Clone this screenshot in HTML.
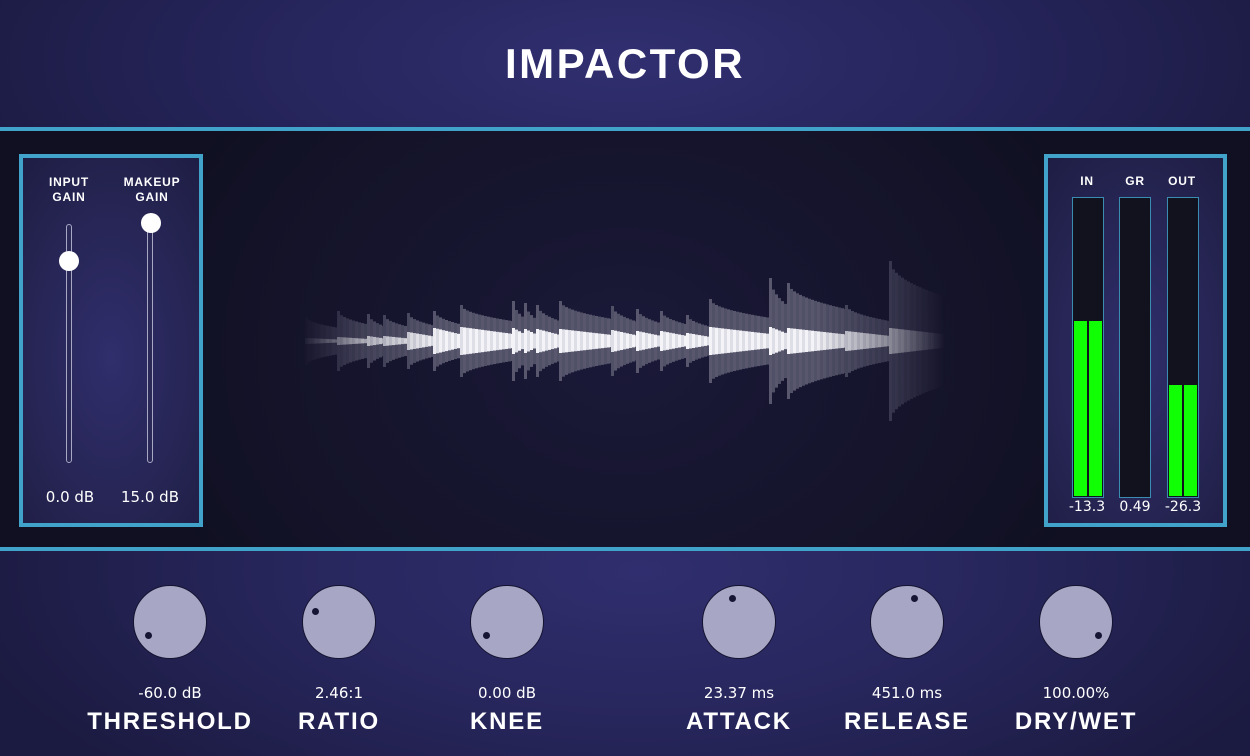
<!DOCTYPE html>
<html><head><meta charset="utf-8"><style>
*{margin:0;padding:0;box-sizing:border-box}
body{width:1250px;height:756px;overflow:hidden;background:#15152e;font-family:"Liberation Sans","DejaVu Sans",sans-serif;color:#fff;position:relative}
.hdr{position:absolute;left:0;top:0;width:1250px;height:127px;background:radial-gradient(ellipse 700px 260px at 625px 60px,#312f70 0%,#25245a 55%,#1c1b42 100%)}
.line{position:absolute;left:0;width:1250px;height:4px;background:#41a3c9}
.mid{position:absolute;left:0;top:131px;width:1250px;height:416px;background:radial-gradient(ellipse 500px 400px at 625px 220px,#1a1938 0%,#141329 70%,#101022 100%)}
.bot{position:absolute;left:0;top:551px;width:1250px;height:205px;background:radial-gradient(ellipse 700px 300px at 640px 20px,#302e6e 0%,#27265c 50%,#1b1a40 100%)}
h1{position:absolute;left:0;width:1250px;top:40px;text-align:center;font-size:42px;font-weight:bold;letter-spacing:2.5px;font-family:"Liberation Sans",sans-serif}
.panel{position:absolute;border:4px solid #41a3c9;background:radial-gradient(ellipse 140px 260px at 50% 55%,#302e6c 0%,#24234f 70%,#1e1d44 100%)}
.sl{position:absolute;font-size:12px;font-weight:bold;text-align:center;letter-spacing:0.8px;line-height:15px;font-family:"Liberation Sans",sans-serif}
.trk{position:absolute;width:6px;border:1.5px solid #a8a7c4;border-radius:3px;background:#2a2958}
.th{position:absolute;width:20px;height:20px;border-radius:50%;background:#fff}
.v{position:absolute;font-size:15px;text-align:center;font-family:"DejaVu Sans",sans-serif}
.meter{position:absolute;top:197px;width:32px;height:301px;border:1px solid #3a8db0;background:#12121f}
.g{position:absolute;bottom:1px;width:13px;background:#10ff04}
.knob{position:absolute;width:74px;height:74px;border-radius:50%;background:#a7a6c4;border:1.5px solid #141330}
.dot{position:absolute;width:7px;height:7px;border-radius:50%;background:#171534}
.kv{position:absolute;width:200px;text-align:center;font-size:15px;top:684px;font-family:"DejaVu Sans",sans-serif}
.kl{position:absolute;width:240px;text-align:center;font-size:24px;font-weight:bold;top:708px;letter-spacing:1.8px;font-family:"Liberation Sans",sans-serif}
</style></head><body>
<div class="hdr"></div>
<h1>IMPACTOR</h1>
<div class="line" style="top:127px"></div>
<div class="mid"></div>
<div class="line" style="top:547px"></div>
<div class="bot"></div>

<svg id="wv" style="position:absolute;left:0;top:0" width="1250" height="756">
<defs>
<linearGradient id="fade" x1="300" x2="945" y1="0" y2="0" gradientUnits="userSpaceOnUse">
<stop offset="0" stop-color="#fff" stop-opacity="0"/>
<stop offset="0.1" stop-color="#fff" stop-opacity="0.7"/>
<stop offset="0.22" stop-color="#fff" stop-opacity="1"/>
<stop offset="0.8" stop-color="#fff" stop-opacity="1"/>
<stop offset="0.92" stop-color="#fff" stop-opacity="0.5"/>
<stop offset="1" stop-color="#fff" stop-opacity="0"/>
</linearGradient>
<mask id="m"><rect x="0" y="0" width="1250" height="756" fill="url(#fade)"/></mask>
</defs>
<g id="wg" mask="url(#m)"></g>
</svg>

<div class="panel" style="left:19px;top:154px;width:184px;height:373px"></div>
<div class="sl" style="left:39px;top:175px;width:60px">INPUT<br>GAIN</div>
<div class="sl" style="left:113px;top:175px;width:78px">MAKEUP<br>GAIN</div>
<div class="trk" style="left:66px;top:224px;height:239px"></div>
<div class="trk" style="left:147px;top:224px;height:239px"></div>
<div class="th" style="left:59px;top:251px"></div>
<div class="th" style="left:141px;top:213px"></div>
<div class="v" style="left:30px;top:488px;width:80px">0.0 dB</div>
<div class="v" style="left:110px;top:488px;width:80px">15.0 dB</div>

<div class="panel" style="left:1044px;top:154px;width:183px;height:373px"></div>
<div class="sl" style="left:1067px;top:174px;width:40px">IN</div>
<div class="sl" style="left:1115px;top:174px;width:40px">GR</div>
<div class="sl" style="left:1162px;top:174px;width:40px">OUT</div>
<div class="meter" style="left:1072px"><div class="g" style="left:1px;height:175px"></div><div class="g" style="left:16px;height:175px"></div></div>
<div class="meter" style="left:1119px"></div>
<div class="meter" style="left:1167px"><div class="g" style="left:1px;height:111px"></div><div class="g" style="left:16px;height:111px"></div></div>
<div class="v" style="left:1057px;top:499px;width:60px;font-size:14px">-13.3</div>
<div class="v" style="left:1105px;top:499px;width:60px;font-size:14px">0.49</div>
<div class="v" style="left:1153px;top:499px;width:60px;font-size:14px">-26.3</div>

<div class="knob" style="left:133px;top:585px"><div class="dot" style="left:11px;top:46px"></div></div>
<div class="knob" style="left:302px;top:585px"><div class="dot" style="left:9px;top:22px"></div></div>
<div class="knob" style="left:470px;top:585px"><div class="dot" style="left:12px;top:46px"></div></div>
<div class="knob" style="left:702px;top:585px"><div class="dot" style="left:26px;top:9px"></div></div>
<div class="knob" style="left:870px;top:585px"><div class="dot" style="left:40px;top:9px"></div></div>
<div class="knob" style="left:1039px;top:585px"><div class="dot" style="left:55px;top:46px"></div></div>

<div class="kv" style="left:70px">-60.0 dB</div>
<div class="kv" style="left:239px">2.46:1</div>
<div class="kv" style="left:407px">0.00 dB</div>
<div class="kv" style="left:639px">23.37 ms</div>
<div class="kv" style="left:807px">451.0 ms</div>
<div class="kv" style="left:976px">100.00%</div>
<div class="kl" style="left:50px">THRESHOLD</div>
<div class="kl" style="left:219px">RATIO</div>
<div class="kl" style="left:387px">KNEE</div>
<div class="kl" style="left:619px">ATTACK</div>
<div class="kl" style="left:787px">RELEASE</div>
<div class="kl" style="left:956px">DRY/WET</div>

<script>
var segs=[[305,24,3],[337,30,4],[367,27,5],[383,26,5],[407,28,9],[433,30,13],[460,36,14],[512,40,13],[524,38,12],[536,36,12],[559,40,12],[611,35,11],[636,32,10],[660,30,10],[686,26,8],[709,42,14],[769,63,14],[787,58,13],[845,36,10],[889,80,13],[945,0,0]];
var c=341,dark='',light='';
for(var i=0;i<segs.length-1;i++){
 var x0=segs[i][0],x1=segs[i+1][0],D=segs[i][1],L=segs[i][2];
 for(var x=x0;x<x1;x+=3){
  var t=(x-x0)/Math.max(1,(x1-x0));
  var d=D*(1-0.45*Math.sqrt(t)),l=L*(1-0.5*t);
  var sh=(Math.floor(x/3)%2)?0:1;
  dark+='<rect x="'+x+'" y="'+(c-d)+'" width="3" height="'+(2*d)+'" fill="'+(sh?'#58576e':'#505066')+'"/>';
  light+='<rect x="'+x+'" y="'+(c-l)+'" width="3" height="'+(2*l)+'" fill="'+(sh?'#f4f4f8':'#dedee6')+'"/>';
 }
}
document.getElementById('wg').innerHTML=dark+light;
</script>
</body></html>
